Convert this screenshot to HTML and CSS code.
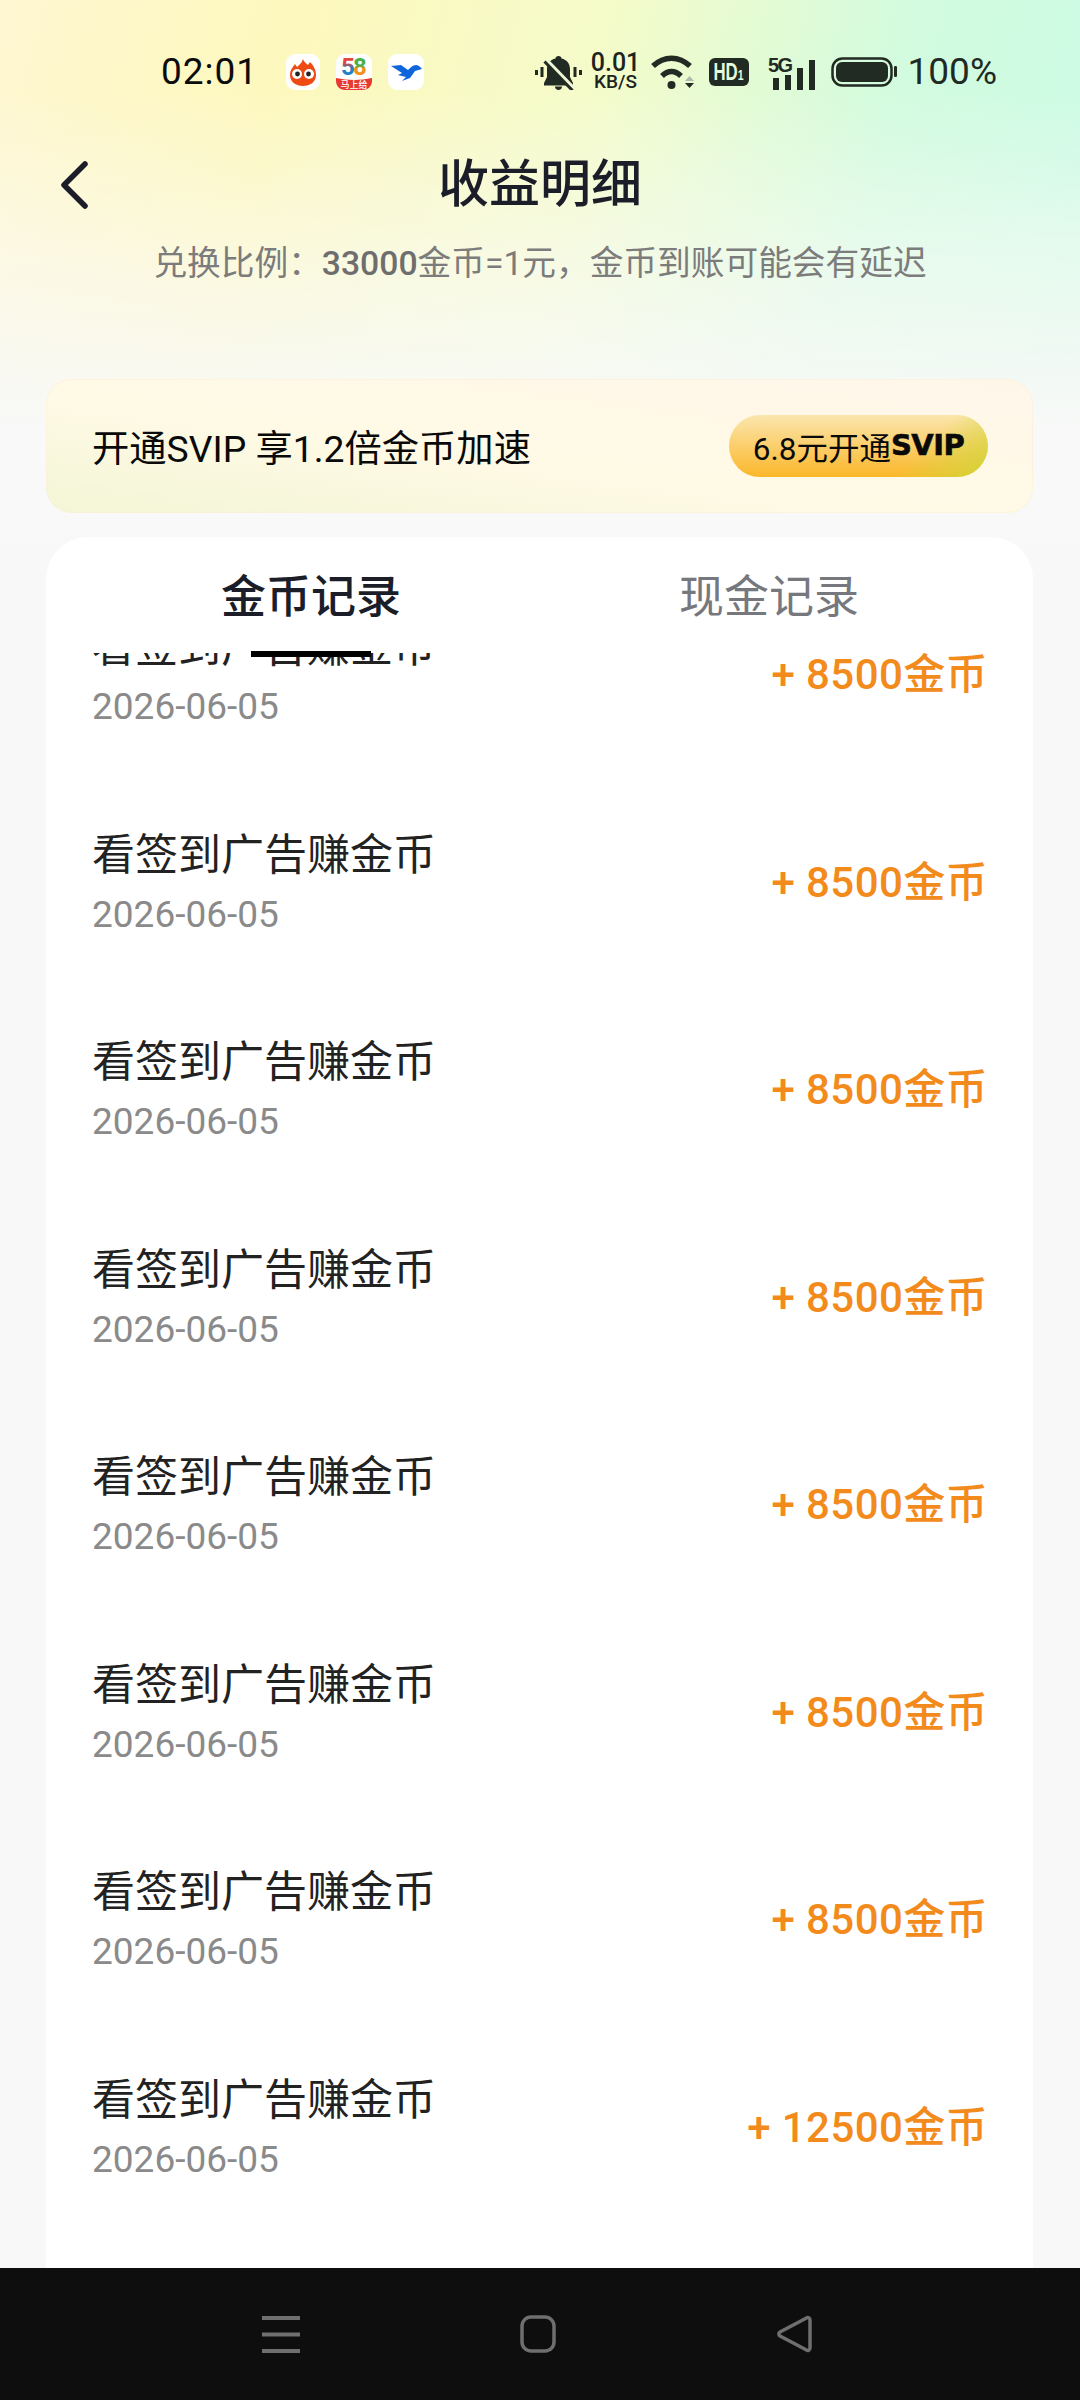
FILE: index.html
```html
<!DOCTYPE html>
<html lang="zh-CN">
<head>
<meta charset="utf-8">
<title>收益明细</title>
<link rel="stylesheet" href="styles.css">
</head>
<body>
<div class="phone">
  <div class="status">
    <div class="status-left">
      <span class="time">02:01</span>
      <svg class="logo logo-first" viewBox="0 0 34 36"><rect width="34" height="36" rx="9" fill="#fff"/><path d="M17 5c1 3 3 4 5 6l2-3c4 4 6 8 6 13 0 7-6 11-13 11S4 28 4 21c0-5 3-8 5-11l2 3c2-2 5-4 6-8z" fill="#ee4a14"/><circle cx="11" cy="20" r="5" fill="#fff"/><circle cx="23" cy="20" r="5" fill="#fff"/><circle cx="11.500" cy="20" r="2.400" fill="#222"/><circle cx="22.500" cy="20" r="2.400" fill="#222"/></svg>
      <svg class="logo" viewBox="0 0 36 36"><defs><linearGradient id="g5" x1="0" y1="0" x2="0" y2="1"><stop offset=".35" stop-color="#e2483a"/><stop offset=".55" stop-color="#1f82c9"/></linearGradient><linearGradient id="g8" x1="0" y1="0" x2="0" y2="1"><stop offset=".45" stop-color="#49b048"/><stop offset=".55" stop-color="#f09020"/></linearGradient></defs><rect width="36" height="36" rx="9" fill="#fff"/><path d="M0 24q18 4 36 0v3c0 5-4 9-9 9H9c-5 0-9-4-9-9z" fill="#e8392f"/><text x="5" y="21" class="l58" fill="url(#g5)">5</text><text x="17" y="21" class="l58" fill="url(#g8)">8</text><text x="18" y="34" class="l58c">马上给</text></svg>
      <svg class="logo" viewBox="0 0 36 36"><rect width="36" height="36" rx="9" fill="#fff"/><path d="M3 12l10-1 7 5c2-2 5-5 8-5 3 0 5 3 6 4l-7 2-5 7-8 3 4-4-8-2 4-2z" fill="#0f66dc"/></svg>
    </div>
    <div class="status-right">
      <svg class="ic-bell" viewBox="0 0 49 35"><g fill="#222a24"><rect x="1" y="15" width="3" height="5"/><rect x="6.500" y="12" width="3" height="10"/><rect x="39.500" y="12" width="3" height="10"/><rect x="45" y="15" width="3" height="5"/><path d="M24.500 1c1.800 0 3 1 3 2.400 5.500 1.300 8.500 5.300 8.500 10.600v8l3 6v2.500H10v-2.500l3-6v-8c0-5.300 3-9.300 8.500-10.600 0-1.400 1.200-2.400 3-2.400z"/><path d="M21 31.500h7c0 2-1.500 3.500-3.500 3.500S21 33.500 21 31.500z"/></g><path d="M12 5l28 29" stroke="#eff9d4" stroke-width="4.500"/><path d="M10.500 6.500l28 29" stroke="#222a24" stroke-width="3"/></svg>
      <div class="speed"><span class="speed-num">0.01</span><span class="speed-unit">KB/S</span></div>
      <svg class="ic-wifi" viewBox="0 0 45 34"><g fill="none" stroke="#222a24" stroke-width="5.500"><path d="M2 11c11-10.500 26-10.500 37 0"/><path d="M11 21c6-6 13-6 19 0"/></g><circle cx="20.500" cy="30" r="4" fill="#222a24"/><path d="M34 26l4.500-5 4.500 5z" fill="#aebbab"/><path d="M34 28h9l-4.500 5z" fill="#222a24"/></svg>
      <div class="hd"><span class="hd-text">HD<span class="hd-sub">1</span></span></div>
      <svg class="ic-signal" viewBox="0 -4 47 36"><text x="0" y="14" class="sig-text">5G</text><rect x="5" y="20" width="6" height="12" fill="#222a24"/><rect x="17" y="17" width="6" height="15" fill="#222a24"/><rect x="29" y="10" width="6" height="22" fill="#222a24"/><rect x="41" y="2" width="6" height="30" fill="#222a24"/></svg>
      <svg class="ic-batt" viewBox="0 0 66 30"><rect x="1.500" y="1.500" width="59" height="27" rx="10" fill="none" stroke="#222a24" stroke-width="2.500"/><rect x="5" y="5" width="52" height="20" rx="6" fill="#222a24"/><rect x="63" y="9" width="3" height="11" rx="1.200" fill="#222a24"/></svg>
      <span class="pct">100%</span>
    </div>
  </div>

  <div class="titlebar">
    <div class="back"><svg class="ic-back" viewBox="0 0 28 48"><path d="M25 3L4 24l21 21" fill="none" stroke="#1b1d28" stroke-width="5.500" stroke-linecap="round" stroke-linejoin="round"/></svg></div>
    <h1 class="title">收益明细</h1>
    <div></div>
  </div>
  <p class="subtitle">兑换比例：<b class="sub-num">33000</b>金币=1元，金币到账可能会有延迟</p>

  <div class="promo">
    <span class="promo-text">开通SVIP 享1.2倍金币加速</span>
    <span class="pill">6.8元开通<b class="pill-svip">SVIP</b></span>
  </div>

  <div class="card">
    <div class="tabs">
      <div class="tab tab-on">金币记录<i class="tab-bar"></i></div>
      <div class="tab">现金记录</div>
    </div>
    <div class="list">
      <div class="list-inner">
        <div class="row"><div><div class="row-title">看签到广告赚金币</div><div class="row-date">2026-06-05</div></div><div class="row-amt">+ 8500金币</div></div>
        <div class="row"><div><div class="row-title">看签到广告赚金币</div><div class="row-date">2026-06-05</div></div><div class="row-amt">+ 8500金币</div></div>
        <div class="row"><div><div class="row-title">看签到广告赚金币</div><div class="row-date">2026-06-05</div></div><div class="row-amt">+ 8500金币</div></div>
        <div class="row"><div><div class="row-title">看签到广告赚金币</div><div class="row-date">2026-06-05</div></div><div class="row-amt">+ 8500金币</div></div>
        <div class="row"><div><div class="row-title">看签到广告赚金币</div><div class="row-date">2026-06-05</div></div><div class="row-amt">+ 8500金币</div></div>
        <div class="row"><div><div class="row-title">看签到广告赚金币</div><div class="row-date">2026-06-05</div></div><div class="row-amt">+ 8500金币</div></div>
        <div class="row"><div><div class="row-title">看签到广告赚金币</div><div class="row-date">2026-06-05</div></div><div class="row-amt">+ 8500金币</div></div>
        <div class="row"><div><div class="row-title">看签到广告赚金币</div><div class="row-date">2026-06-05</div></div><div class="row-amt">+ 12500金币</div></div>
      </div>
    </div>
  </div>

  <div class="nav">
    <svg class="nav-ic" viewBox="0 0 38 38"><path d="M0 3h38M0 19.500h38M0 36h38" stroke="#6f6f6f" stroke-width="4"/></svg>
    <svg class="nav-ic" viewBox="0 0 38 38"><rect x="3" y="2" width="32" height="34" rx="9" fill="none" stroke="#6f6f6f" stroke-width="3.500"/></svg>
    <svg class="nav-ic" viewBox="0 0 38 38"><path d="M34 5c0-2-2-3-3.500-2L4 17c-1.500 1-1.500 3 0 4l26.500 14c1.500 1 3.500 0 3.500-2z" fill="none" stroke="#6f6f6f" stroke-width="3.500" stroke-linejoin="round"/></svg>
  </div>
</div>
</body>
</html>
```
FILE: styles.css
```css
* { box-sizing: border-box; }
html, body { margin: 0; padding: 0; }
body { font-family: Roboto, "Noto Sans CJK SC", sans-serif; }

.phone {
  width: 1080px;
  height: 2400px;
  overflow: hidden;
  display: flex;
  flex-direction: column;
  background-color: #f8f8f8;
  background-image:
    linear-gradient(to bottom, rgba(249,250,248,0) 90px, rgba(250,250,246,.55) 250px, #f8f9f8 430px, #f8f8f8 600px),
    linear-gradient(105deg, #fff7d2 0%, #fdf8bd 24%, #f4fbca 50%, #d2fbdf 74%, #c8fbe6 100%);
  background-size: 100% 100%, 100% 620px;
  background-repeat: no-repeat;
}

/* status bar */
.status {
  height: 44px;
  margin-top: 50px;
  padding: 0 83px 0 161px;
  display: flex;
  justify-content: space-between;
  align-items: center;
  flex: none;
}
.status-left, .status-right { display: flex; align-items: center; }
.time { font-size: 37px; letter-spacing: 1px; color: #0c0c0c; line-height: 44px; width: 92px; }
.logo { width: 36px; height: 36px; margin-left: 16px; }
.logo-first { width: 34px; margin-left: 33px; }
.l58 { font: 700 24px Roboto, sans-serif; }
.l58c { font: 500 9px "Noto Sans CJK SC", sans-serif; fill: #fff; text-anchor: middle; }

.ic-bell { width: 49px; height: 35px; }
.speed { width: 48px; margin-left: 9px; display: flex; flex-direction: column; align-items: center; color: #1d241f; font-weight: 500; }
.speed-num { font-size: 25px; line-height: 20px; }
.speed-unit { font-size: 19px; line-height: 18px; }
.ic-wifi { width: 45px; height: 34px; margin-left: 11px; }
.hd {
  width: 40px; height: 28px; margin-left: 13px;
  background: #222a24; border-radius: 6px; color: #e4fbdd;
  display: flex; justify-content: center;
  font: 700 24px/28px "Liberation Sans", sans-serif;
}
.hd-text { display: inline-block; transform: scaleX(.7); white-space: nowrap; }
.hd-sub { font-size: 15px; }
.ic-signal { width: 47px; height: 36px; margin-left: 19px; }
.sig-text { font: 700 20px "Liberation Sans", sans-serif; fill: #222a24; letter-spacing: -1.500px; }
.ic-batt { width: 66px; height: 30px; margin-left: 16px; }
.pct { font-size: 37px; color: #1f2a23; margin-left: 11px; line-height: 44px; }

/* title */
.titlebar {
  flex: none;
  height: 70px;
  margin-top: 56px;
  display: grid;
  grid-template-columns: 1fr auto 1fr;
  align-items: center;
}
.back { padding-left: 60px; display: flex; }
.ic-back { width: 28px; height: 48px; }
.title { margin: 0; font-size: 51px; font-weight: 500; color: #1b1d28; line-height: 70px; }
.subtitle {
  flex: none;
  margin: 22px 0 0;
  font-size: 33.700px;
  line-height: 44px;
  color: #7c7c7c;
  text-align: center;
}
.sub-num { font-weight: 500; color: #6e6e6e; }

/* promo */
.promo {
  flex: none;
  margin: 93px 47px 0 46px;
  height: 134px;
  border-radius: 26px;
  padding: 0 46px;
  display: flex;
  justify-content: space-between;
  align-items: center;
  background: linear-gradient(to top right, #f3f6d6, #fffae6 45%, #fff6ea);
  box-shadow: inset 0 0 0 1px rgba(250,240,215,.6);
}
.promo-text { font-size: 37.300px; color: #0a0a0a; }
.pill {
  width: 259px;
  height: 62px;
  border-radius: 31px;
  display: flex;
  align-items: center;
  justify-content: center;
  font-size: 31.500px;
  color: #0a0a0a;
  background:
    linear-gradient(135deg, rgba(0,0,0,0) 70%, #d2d63a 100%),
    linear-gradient(to bottom, #fbe6ae, #fbb72a);
  margin-right: -1px;
}
.pill-svip { font: 700 29px "DejaVu Sans", sans-serif; margin-top: -3px; letter-spacing: -.5px; -webkit-text-stroke: .6px #0a0a0a; }

/* card */
.card {
  flex: 1;
  min-height: 0;
  margin: 24px 47px 0 46px;
  background: #fff;
  border-radius: 42px 42px 0 0;
  display: flex;
  flex-direction: column;
}
.tabs {
  flex: none;
  height: 116px;
  display: flex;
  position: relative;
}
.tab {
  position: relative;
  font-size: 45px;
  line-height: 44px;
  padding-top: 39px;
  color: #76787e;
  width: 180px;
  text-align: center;
}
.tab:first-child { margin-left: 175px; }
.tab:last-child { margin-left: 278px; }
.tab-on { color: #1b1d28; font-weight: 500; }
.tab-bar {
  position: absolute;
  left: 30px;
  top: 114px;
  width: 120px;
  height: 6px;
  background: #000;
  z-index: 2;
}

.list { flex: 1; min-height: 0; overflow: hidden; }
.list-inner { margin-top: -82.750px; }
.row {
  height: 207.500px;
  padding: 0 45px 0 46px;
  display: flex;
  justify-content: space-between;
  align-items: center;
}
.row-title { font-size: 43px; line-height: 56px; color: #222; }
.row-date { font-size: 37px; line-height: 44px; margin-top: 10px; color: #8a8a8a; }
.row-amt { font-size: 42px; line-height: 44px; letter-spacing: .4px; font-weight: 500; color: #f28a1c; margin-top: 2px; }

/* nav */
.nav {
  flex: none;
  height: 132px;
  background: #0e0e0e;
  display: flex;
  padding: 47px 0 0 262px;
  gap: 219px;
}
.nav-ic { width: 38px; height: 38px; }
```
